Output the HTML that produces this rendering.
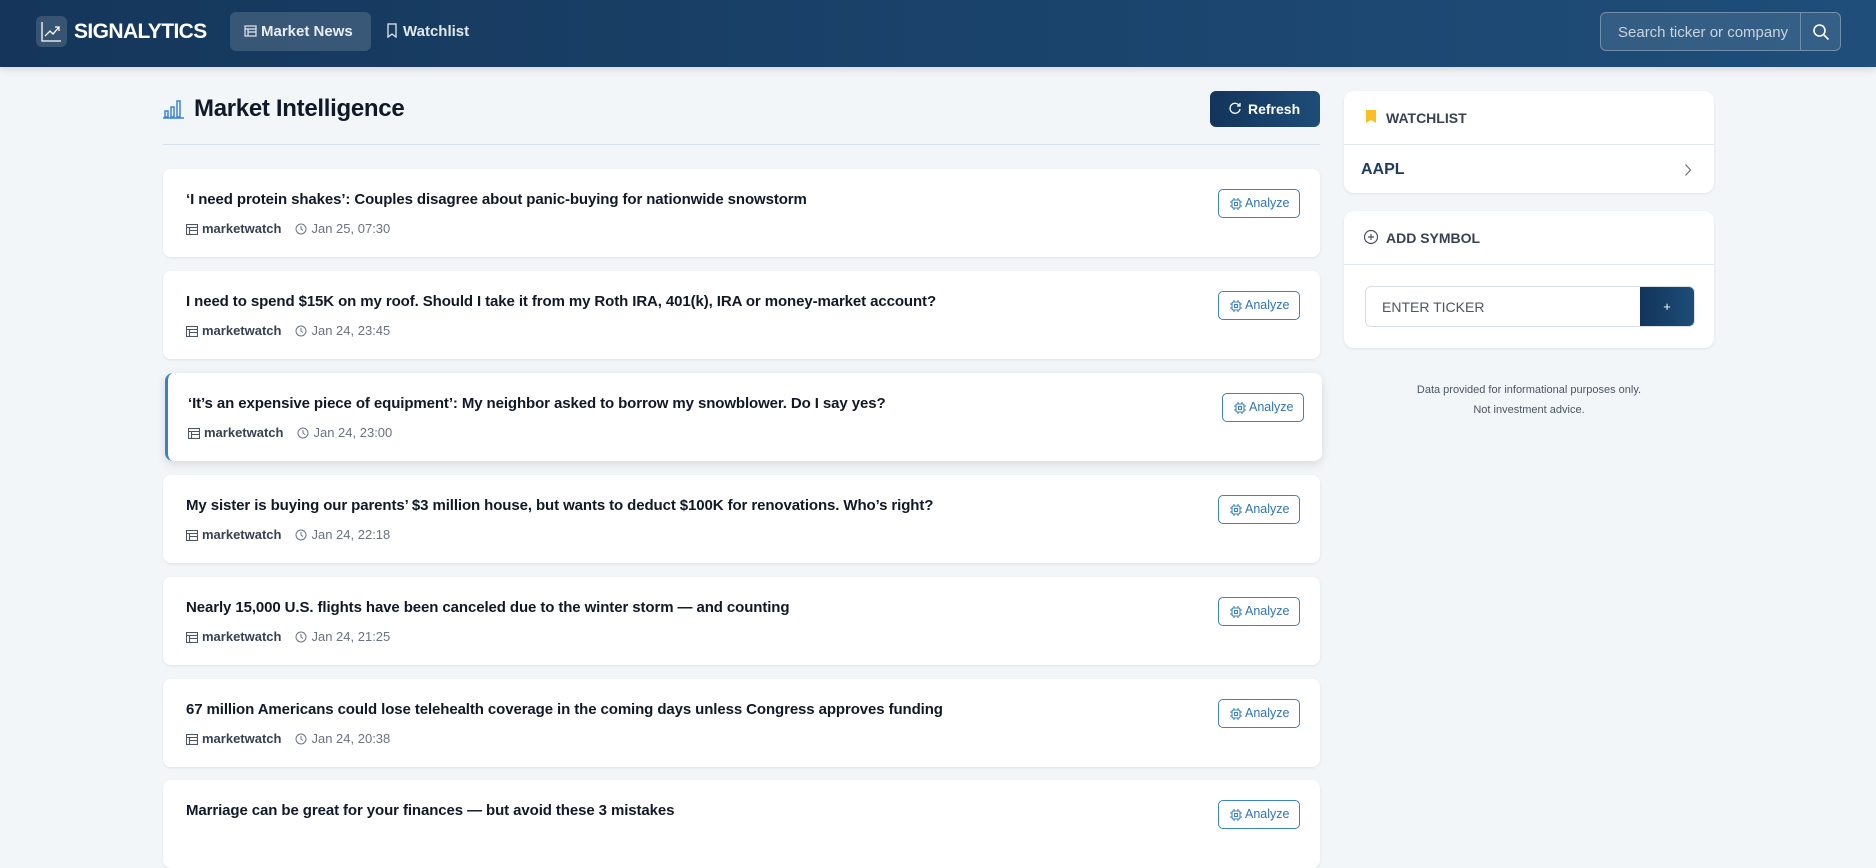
<!DOCTYPE html>
<html><head><meta charset="utf-8"><style>
*{box-sizing:border-box;margin:0;padding:0}
body{width:1876px;height:830px;overflow:hidden;background:#f3f6f9;font-family:"Liberation Sans",sans-serif;color:#111827}
.hdr{position:absolute;left:0;top:0;width:1876px;height:67px;background:linear-gradient(90deg,#15365a,#1f4e7a);box-shadow:0 2px 8px rgba(0,0,0,.15)}
.logo{position:absolute;left:36px;top:16px;width:31px;height:31px;border-radius:6px;background:rgba(255,255,255,.15)}
.brand{position:absolute;left:74px;top:20px;color:#fff;font-weight:700;font-size:21px;letter-spacing:-.6px}
.pill{position:absolute;left:230px;top:12px;width:141px;height:39px;border-radius:6px;background:rgba(255,255,255,.15);color:#e8eef5;font-size:15px;font-weight:700;padding:11px 0 0 14px}
.wl{position:absolute;left:386px;top:23px;color:#e2e8f0;font-size:15px;font-weight:700}
.search{position:absolute;left:1600px;top:12px;width:241px;height:39px;border:1px solid rgba(255,255,255,.3);border-radius:6px;background:rgba(255,255,255,.1)}
.search span{position:absolute;left:17px;top:11px;color:#c9d4e0;font-size:15px;white-space:nowrap;width:178px;overflow:hidden}
.search i{position:absolute;left:199px;top:0;width:1px;height:37px;background:rgba(255,255,255,.3)}
h1{position:absolute;left:194px;top:95px;font-size:24px;font-weight:700;color:#111827;letter-spacing:-.3px}
.refresh{position:absolute;left:1210px;top:91px;width:110px;height:36px;border-radius:6px;background:linear-gradient(90deg,#13345a,#1d4d78);color:#fff;font-weight:700;font-size:14px;padding:10px 0 0 38px}
.div{position:absolute;left:163px;top:144px;width:1157px;height:1px;background:#d8e2ec}
.card{position:absolute;left:163px;width:1157px;height:88px;background:#fff;border-radius:8px;box-shadow:0 1px 3px rgba(0,0,0,.08)}
.card.act{left:165px;border-left:3px solid #3b82c4;box-shadow:0 3px 10px rgba(0,0,0,.12)}
.card b{position:absolute;left:23px;top:22px;font-size:15px;font-weight:700;color:#111827;letter-spacing:-.1px}
.card.act b,.card.act .meta{left:20px}
.meta{position:absolute;left:23px;top:52px;font-size:13px;color:#6b7280}
.meta .src{color:#374151;font-weight:700;margin-right:14px}
.meta svg{vertical-align:-2px;margin-right:4px}
.an{position:absolute;left:1055px;top:20px;width:82px;height:29px;border:1px solid #3b82c4;border-radius:5px;color:#2f73b8;font-size:12.5px;padding:6px 0 0 26px}
.an svg{position:absolute;left:10px;top:7px}
.card.act .an{left:1054px}
.side{position:absolute;left:1344px;width:370px;background:#fff;border-radius:10px;box-shadow:0 1px 3px rgba(0,0,0,.08)}
.sh{height:54px;border-bottom:1px solid #e2e8f0;padding:19px 0 0 42px;font-weight:700;font-size:14px;color:#374151;position:relative}
.foot{position:absolute;left:1344px;width:370px;text-align:center;font-size:11px;color:#4b5563}
</style></head><body>
<svg width="0" height="0" style="position:absolute"><defs>
<symbol id="chip" viewBox="0 0 14 14"><g fill="none" stroke="#3b82c4" stroke-width="1.1"><rect x="3" y="3" width="8" height="8" rx="1.5"/><rect x="5.5" y="5.5" width="3" height="3"/><path d="M5 1v2M9 1v2M5 11v2M9 11v2M1 5h2M1 9h2M11 5h2M11 9h2"/></g></symbol>
<symbol id="news" viewBox="0 0 12 11"><g fill="none" stroke="#4b5563" stroke-width="1.1"><rect x=".5" y=".5" width="11" height="10"/><path d="M.5 3.5h11M3.5 3.5v7M3.5 6.5h8"/></g></symbol>
<symbol id="clock" viewBox="0 0 12 12"><g fill="none" stroke="#6b7280" stroke-width="1"><circle cx="6" cy="6" r="5"/><path d="M6 3v3l2 1.5"/></g></symbol>
</defs></svg>
<div class="hdr">
<div class="logo"><svg width="31" height="31" viewBox="0 0 31 31" fill="none" stroke="#fff" stroke-width="1.3"><path d="M6 6v19h19"/><path d="M9 20l5-5 3 3 6-7"/><path d="M19 11h4v4"/></svg></div>
<div class="brand">SIGNALYTICS</div>
<div class="pill"><svg width="13" height="12" style="vertical-align:-1px;margin-right:4px" viewBox="0 0 13 12" fill="none" stroke="#e2e8f0" stroke-width="1.2"><rect x="1" y="1" width="11" height="10"/><path d="M1 4h11M4 4v7M4 7h8"/></svg>Market News</div>
<div class="wl"><svg width="12" height="15" style="vertical-align:-2px;margin-right:5px" viewBox="0 0 12 15" fill="none" stroke="#e2e8f0" stroke-width="1.3"><path d="M2 1h8v13l-4-3-4 3z"/></svg>Watchlist</div>
<div class="search"><span>Search ticker or company</span><i></i><svg style="position:absolute;left:211px;top:10px" width="18" height="18" viewBox="0 0 18 18" fill="none" stroke="#fff" stroke-width="1.6"><circle cx="7.5" cy="7.5" r="5.5"/><path d="M11.5 11.5l5 5"/></svg></div>
</div>
<svg style="position:absolute;left:163px;top:97px" width="22" height="22" viewBox="0 0 22 22" fill="none" stroke="#3b82d4" stroke-width="1.5"><rect x="2" y="14" width="3" height="6"/><rect x="8" y="10" width="3" height="10"/><rect x="14" y="4" width="3" height="16"/><path d="M0 21h21"/></svg>
<h1>Market Intelligence</h1>
<div class="refresh"><svg style="position:absolute;left:19px;top:11px" width="13" height="13" viewBox="0 0 13 13" fill="none" stroke="#fff" stroke-width="1.3"><path d="M10.5 4A5 5 0 1 0 11 7"/><path d="M11 1v3H8"/></svg>Refresh</div>
<div class="div"></div>

<div class="card" style="top:169px"><b>‘I need protein shakes’: Couples disagree about panic-buying for nationwide snowstorm</b><div class="meta"><span class="src"><svg width="12" height="11"><use href="#news"/></svg>marketwatch</span><svg width="12" height="12"><use href="#clock"/></svg>Jan 25, 07:30</div><div class="an"><svg width="14" height="14"><use href="#chip"/></svg>Analyze</div></div>
<div class="card" style="top:271px"><b>I need to spend $15K on my roof. Should I take it from my Roth IRA, 401(k), IRA or money-market account?</b><div class="meta"><span class="src"><svg width="12" height="11"><use href="#news"/></svg>marketwatch</span><svg width="12" height="12"><use href="#clock"/></svg>Jan 24, 23:45</div><div class="an"><svg width="14" height="14"><use href="#chip"/></svg>Analyze</div></div>
<div class="card act" style="top:373px"><b>‘It’s an expensive piece of equipment’: My neighbor asked to borrow my snowblower. Do I say yes?</b><div class="meta"><span class="src"><svg width="12" height="11"><use href="#news"/></svg>marketwatch</span><svg width="12" height="12"><use href="#clock"/></svg>Jan 24, 23:00</div><div class="an"><svg width="14" height="14"><use href="#chip"/></svg>Analyze</div></div>
<div class="card" style="top:475px"><b>My sister is buying our parents’ $3 million house, but wants to deduct $100K for renovations. Who’s right?</b><div class="meta"><span class="src"><svg width="12" height="11"><use href="#news"/></svg>marketwatch</span><svg width="12" height="12"><use href="#clock"/></svg>Jan 24, 22:18</div><div class="an"><svg width="14" height="14"><use href="#chip"/></svg>Analyze</div></div>
<div class="card" style="top:577px"><b>Nearly 15,000 U.S. flights have been canceled due to the winter storm — and counting</b><div class="meta"><span class="src"><svg width="12" height="11"><use href="#news"/></svg>marketwatch</span><svg width="12" height="12"><use href="#clock"/></svg>Jan 24, 21:25</div><div class="an"><svg width="14" height="14"><use href="#chip"/></svg>Analyze</div></div>
<div class="card" style="top:679px"><b>67 million Americans could lose telehealth coverage in the coming days unless Congress approves funding</b><div class="meta"><span class="src"><svg width="12" height="11"><use href="#news"/></svg>marketwatch</span><svg width="12" height="12"><use href="#clock"/></svg>Jan 24, 20:38</div><div class="an"><svg width="14" height="14"><use href="#chip"/></svg>Analyze</div></div>
<div class="card" style="top:780px"><b>Marriage can be great for your finances — but avoid these 3 mistakes</b><div class="an"><svg width="14" height="14"><use href="#chip"/></svg>Analyze</div></div>

<div class="side" style="top:91px;height:102px">
<div class="sh"><svg style="position:absolute;left:21px;top:18px" width="12" height="15" viewBox="0 0 12 15"><path d="M1 1h10v13l-5-3-5 3z" fill="#fbbf24"/></svg>WATCHLIST</div>
<div style="position:absolute;left:17px;top:70px;font-weight:700;font-size:16px;color:#1e3a5f">AAPL</div>
<svg style="position:absolute;left:340px;top:72px" width="8" height="14" viewBox="0 0 8 14" fill="none" stroke="#6b7280" stroke-width="1.2"><path d="M1.5 1.5l5 5.5-5 5.5"/></svg>
</div>
<div class="side" style="top:211px;height:137px">
<div class="sh"><svg style="position:absolute;left:19px;top:18px" width="16" height="16" viewBox="0 0 16 16" fill="none" stroke="#4b5563" stroke-width="1.2"><circle cx="8" cy="8" r="6.5"/><path d="M8 5v6M5 8h6"/></svg>ADD SYMBOL</div>
<div style="position:absolute;left:21px;top:75px;width:330px;height:41px;border:1px solid #d8dee6;border-radius:6px;overflow:hidden">
<span style="position:absolute;left:16px;top:12px;font-size:14px;color:#4b5563">ENTER TICKER</span>
<div style="position:absolute;right:0;top:0;width:54px;height:41px;background:linear-gradient(90deg,#13345a,#1d4d78);color:#fff;text-align:center;line-height:40px;font-size:13px">+</div>
</div>
</div>
<div class="foot" style="top:384px">Data provided for informational purposes only.</div>
<div class="foot" style="top:404px">Not investment advice.</div>
</body></html>
